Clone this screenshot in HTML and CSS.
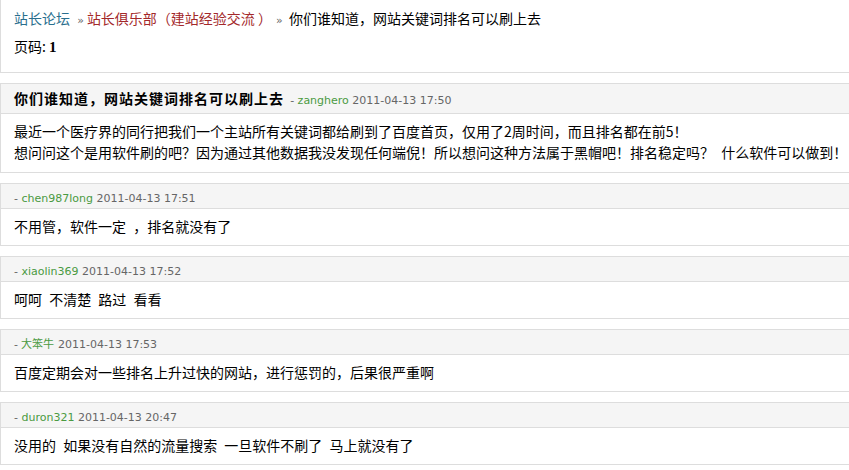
FILE: index.html
```html
<!DOCTYPE html>
<html lang="zh-CN">
<head>
<meta charset="utf-8">
<title>你们谁知道，网站关键词排名可以刷上去</title>
<link rel="stylesheet" href="styles.css">
</head>
<body>
<div class="page">
  <div class="box nav">
    <div class="crumbs"><a class="forum">站长论坛</a> <span class="sep">»</span><a class="board">站长俱乐部（建站经验交流 ）</a><span class="sep">»</span> 你们谁知道，网站关键词排名可以刷上去</div>
    <div class="pager">页码: <b>1</b></div>
  </div>

  <div class="box post">
    <div class="head head-main"><span class="title">你们谁知道，网站关键词排名可以刷上去</span> <span class="meta">- <a class="user">zanghero</a> 2011-04-13 17:50</span></div>
    <div class="body body-main">最近一个医疗界的同行把我们一个主站所有关键词都给刷到了百度首页，仅用了2周时间，而且排名都在前5！<br>想问问这个是用软件刷的吧？因为通过其他数据我没发现任何端倪！所以想问这种方法属于黑帽吧！排名稳定吗？ 什么软件可以做到！</div>
  </div>

  <div class="box post">
    <div class="head"><span class="meta">- <a class="user">chen987long</a> 2011-04-13 17:51</span></div>
    <div class="body">不用管，软件一定 ，排名就没有了</div>
  </div>

  <div class="box post">
    <div class="head"><span class="meta">- <a class="user">xiaolin369</a> 2011-04-13 17:52</span></div>
    <div class="body">呵呵 不清楚 路过 看看</div>
  </div>

  <div class="box post">
    <div class="head"><span class="meta">- <a class="user">大笨牛</a> 2011-04-13 17:53</span></div>
    <div class="body">百度定期会对一些排名上升过快的网站，进行惩罚的，后果很严重啊</div>
  </div>

  <div class="box post">
    <div class="head"><span class="meta">- <a class="user">duron321</a> 2011-04-13 20:47</span></div>
    <div class="body">没用的 如果没有自然的流量搜索 一旦软件不刷了 马上就没有了</div>
  </div>
</div>
</body>
</html>
```

FILE: styles.css
```css
html, body {
  margin: 0;
  padding: 0;
  background: #fff;
  overflow: hidden;
}
body {
  font-family: "Noto Sans CJK SC", "Liberation Sans", sans-serif;
  font-size: 14px;
  color: #000;
}
.page {
  display: flex;
  flex-direction: column;
  gap: 10px;
  width: 880px;
}
.box {
  border: 1px solid #dddddd;
  background: #fff;
}
.nav {
  border-top: none;
  padding: 4px 13px 12px;
}
.crumbs, .pager {
  line-height: 28px;
  height: 28px;
  white-space: nowrap;
}
.forum { color: #2a6f8e; }
.board { color: #a3282a; }
.sep {
  color: #666;
  font-family: "DejaVu Sans", sans-serif;
  font-size: 11px;
  margin: 0 3px 0 4px;
}
.pager b {
  font-family: "Liberation Serif", serif;
  font-size: 15px;
}
.head {
  background: #f5f5f5;
  border-bottom: 1px solid #dddddd;
  padding: 0 13px;
  height: 24px;
  line-height: 24px;
  white-space: nowrap;
}
.head-main {
  height: 29px;
  line-height: 29px;
}
.title {
  font-weight: bold;
  letter-spacing: 1px;
  margin-right: 3px;
}
.meta {
  font-family: "DejaVu Sans", sans-serif;
  font-size: 11px;
  color: #666;
}
.user {
  color: #4a9a42;
}
.body {
  padding: 7px 13px 8px;
  line-height: 21px;
  white-space: nowrap;
  word-spacing: 4px;
}
.body-main {
  padding-bottom: 9px;
}
```
